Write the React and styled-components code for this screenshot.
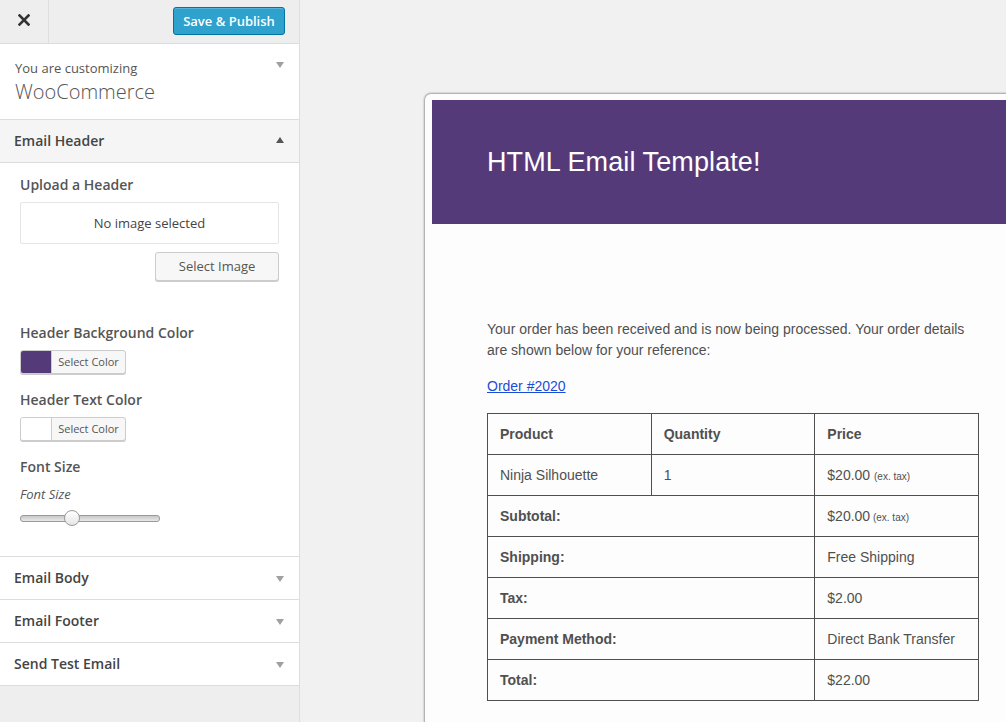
import styled, { createGlobalStyle } from "styled-components";

const GlobalStyle = createGlobalStyle`
  html, body {
    margin: 0;
    padding: 0;
    height: 722px;
    overflow: hidden;
    background: #f1f1f1;
  }
  * {
    box-sizing: border-box;
  }
`;

const orderRows = [
  { label: "Subtotal:", value: "$20.00", note: "(ex. tax)" },
  { label: "Shipping:", value: "Free Shipping" },
  { label: "Tax:", value: "$2.00" },
  { label: "Payment Method:", value: "Direct Bank Transfer" },
  { label: "Total:", value: "$22.00" },
];

const closedSections = ["Email Body", "Email Footer", "Send Test Email"];

function App() {
  return (
    <>
      <GlobalStyle />
      <Page>
        <Sidebar>
          <TopBar>
            <CloseButton>
              <svg width="12" height="12" viewBox="0 0 12 12">
                <path
                  d="M1.5 1.5 L10.5 10.5 M10.5 1.5 L1.5 10.5"
                  stroke="#333"
                  strokeWidth="2.6"
                  strokeLinecap="square"
                />
              </svg>
            </CloseButton>
            <PublishButton>Save &amp; Publish</PublishButton>
          </TopBar>

          <InfoSection>
            <div>
              <InfoLabel>You are customizing</InfoLabel>
              <InfoTitle>WooCommerce</InfoTitle>
            </div>
            <Arrow />
          </InfoSection>

          <SectionHead $open>
            Email Header
            <Arrow $up />
          </SectionHead>

          <SectionBody>
            <ControlTitle>Upload a Header</ControlTitle>
            <ImagePlaceholder>No image selected</ImagePlaceholder>
            <ButtonRow>
              <GrayButton>Select Image</GrayButton>
            </ButtonRow>

            <ControlTitle $gap={42}>Header Background Color</ControlTitle>
            <ColorButton>
              <Swatch $color="#553a7a" />
              <SwatchLabel>Select Color</SwatchLabel>
            </ColorButton>

            <ControlTitle $gap={16}>Header Text Color</ControlTitle>
            <ColorButton>
              <Swatch $color="#ffffff" />
              <SwatchLabel>Select Color</SwatchLabel>
            </ColorButton>

            <ControlTitle $gap={16}>Font Size</ControlTitle>
            <ControlHint>Font Size</ControlHint>
            <Slider>
              <SliderThumb />
            </Slider>
          </SectionBody>

          {closedSections.map((name) => (
            <SectionHead key={name}>
              {name}
              <Arrow />
            </SectionHead>
          ))}
        </Sidebar>

        <Preview>
          <EmailFrame>
            <EmailHeader>HTML Email Template!</EmailHeader>
            <EmailBody>
              <Intro>
                Your order has been received and is now being processed. Your
                order details are shown below for your reference:
              </Intro>
              <OrderLink href="#">Order #2020</OrderLink>
              <OrderTable>
                <tbody>
                  <tr>
                    <Th>Product</Th>
                    <Th>Quantity</Th>
                    <Th>Price</Th>
                  </tr>
                  <tr>
                    <Td>Ninja Silhouette</Td>
                    <Td>1</Td>
                    <Td>
                      $20.00 <Small>(ex. tax)</Small>
                    </Td>
                  </tr>
                  {orderRows.map((row) => (
                    <tr key={row.label}>
                      <Th colSpan={2}>{row.label}</Th>
                      <Td>
                        {row.value}
                        {row.note && <Small> {row.note}</Small>}
                      </Td>
                    </tr>
                  ))}
                </tbody>
              </OrderTable>
            </EmailBody>
          </EmailFrame>
        </Preview>
      </Page>
    </>
  );
}

export default App;

const Page = styled.div`
  display: flex;
  height: 722px;
  overflow: hidden;
  font-family: "Open Sans", "Liberation Sans", sans-serif;
`;

const Sidebar = styled.div`
  width: 300px;
  flex-shrink: 0;
  height: 100%;
  background: #eeeeee;
  border-right: 1px solid #dddddd;
  display: flex;
  flex-direction: column;
`;

const TopBar = styled.div`
  height: 44px;
  display: flex;
  align-items: center;
  justify-content: space-between;
  border-bottom: 1px solid #dddddd;
  padding-right: 14px;
`;

const CloseButton = styled.div`
  width: 49px;
  height: 43px;
  border-right: 1px solid #dddddd;
  display: flex;
  align-items: center;
  justify-content: center;
  padding-bottom: 3px;
`;

const PublishButton = styled.button`
  width: 112px;
  height: 28px;
  margin-top: -2px;
  border: 1px solid #0074a2;
  border-radius: 3px;
  background: #2ea2cc;
  box-shadow: inset 0 1px 0 rgba(120, 200, 230, 0.5);
  color: #ffffff;
  font-family: "Open Sans", sans-serif;
  font-size: 13px;
  font-weight: 600;
  padding: 0;
`;

const InfoSection = styled.div`
  height: 76px;
  background: #ffffff;
  border-bottom: 1px solid #dddddd;
  display: flex;
  justify-content: space-between;
  padding: 15px 15px 0 15px;
`;

const InfoLabel = styled.div`
  font-size: 13px;
  line-height: 18px;
  color: #555555;
`;

const InfoTitle = styled.div`
  font-size: 20px;
  line-height: 28px;
  font-weight: 300;
  color: #555555;
  margin-top: 1px;
`;

const Arrow = styled.span`
  width: 0;
  height: 0;
  margin-top: ${(p) => (p.$up ? "0" : "3px")};
  border-left: 4.5px solid transparent;
  border-right: 4.5px solid transparent;
  ${(p) =>
    p.$up
      ? "border-bottom: 6px solid #555;"
      : "border-top: 6px solid #a0a0a0;"}
  align-self: ${(p) => (p.$up ? "center" : "flex-start")};
`;

const SectionHead = styled.div`
  height: 43px;
  flex-shrink: 0;
  display: flex;
  align-items: center;
  justify-content: space-between;
  padding: 0 15px 2px 14px;
  background: ${(p) => (p.$open ? "#f5f5f5" : "#ffffff")};
  border-bottom: 1px solid #dddddd;
  font-size: 14px;
  font-weight: 600;
  color: #444444;

  ${Arrow} {
    align-self: center;
    margin-top: ${(p) => (p.$open ? "0" : "3px")};
  }
`;

const SectionBody = styled.div`
  background: #ffffff;
  border-bottom: 1px solid #dddddd;
  padding: 12px 20px 30px 20px;
  display: flex;
  flex-direction: column;
`;

const ControlTitle = styled.div`
  font-size: 14px;
  line-height: 20px;
  font-weight: 600;
  color: #555555;
  margin-top: ${(p) => (p.$gap ? `${p.$gap}px` : "0")};
  margin-bottom: 7px;
`;

const ImagePlaceholder = styled.div`
  width: 259px;
  height: 42px;
  border: 1px solid #e5e5e5;
  border-radius: 2px;
  display: flex;
  align-items: center;
  justify-content: center;
  font-size: 13px;
  color: #444444;
`;

const ButtonRow = styled.div`
  display: flex;
  justify-content: flex-end;
  width: 259px;
  margin-top: 8px;
`;

const GrayButton = styled.button`
  width: 124px;
  height: 29px;
  border: 1px solid #cccccc;
  border-radius: 3px;
  background: #f7f7f7;
  box-shadow: 0 1px 0 #cccccc;
  font-family: "Open Sans", sans-serif;
  font-size: 13px;
  color: #555555;
  padding: 0 0 2px 0;
`;

const ColorButton = styled.div`
  display: flex;
  width: 106px;
  height: 24px;
  border: 1px solid #cccccc;
  border-radius: 3px;
  background: #f7f7f7;
  box-shadow: 0 1px 0 #cccccc;
  overflow: hidden;
`;

const Swatch = styled.span`
  width: 31px;
  height: 100%;
  background: ${(p) => p.$color};
  border-right: 1px solid #cccccc;
`;

const SwatchLabel = styled.span`
  flex: 1;
  display: flex;
  align-items: center;
  justify-content: center;
  padding-bottom: 1px;
  font-size: 11px;
  color: #555555;
`;

const ControlHint = styled.div`
  font-size: 13px;
  line-height: 20px;
  font-style: italic;
  color: #555555;
  margin-top: 0;
  margin-bottom: 6px;
`;

const Slider = styled.div`
  position: relative;
  width: 140px;
  height: 16px;
  display: flex;
  align-items: center;

  &::before {
    content: "";
    width: 100%;
    height: 5px;
    border-radius: 3px;
    border: 1px solid #9a9a9a;
    background: linear-gradient(#c8c8c8, #e8e8e8);
  }
`;

const SliderThumb = styled.span`
  position: absolute;
  left: 44px;
  top: 0;
  width: 16px;
  height: 16px;
  border-radius: 50%;
  border: 1px solid #9a9a9a;
  background: linear-gradient(#ffffff, #e6e6e6);
`;

const Preview = styled.div`
  flex: 1;
  min-width: 0;
  overflow: hidden;
  padding: 94px 0 0 125px;
  background: #f1f1f1;
`;

const EmailFrame = styled.div`
  width: 640px;
  height: 700px;
  background: #fdfdfd;
  border-radius: 6px 0 0 0;
  box-shadow: 0 0 2px 1px rgba(0, 0, 0, 0.35);
  padding: 6px 0 0 7px;
  font-family: "Liberation Sans", Arial, sans-serif;
`;

const EmailHeader = styled.div`
  width: 620px;
  height: 124px;
  background: #553a7a;
  color: #ffffff;
  display: flex;
  align-items: center;
  padding-left: 55px;
  font-size: 27px;
  letter-spacing: 0.1px;
`;

const EmailBody = styled.div`
  width: 547px;
  padding: 95px 0 0 55px;
  color: #505050;
`;

const Intro = styled.p`
  margin: 0;
  font-size: 14px;
  line-height: 21px;
`;

const OrderLink = styled.a`
  display: block;
  margin-top: 15px;
  font-size: 14px;
  line-height: 21px;
  color: #1a4dd6;
  text-decoration: underline;
  width: max-content;
`;

const OrderTable = styled.table`
  margin-top: 16px;
  width: 492px;
  border-collapse: collapse;
  table-layout: fixed;
  font-size: 14px;
  color: #505050;

  td,
  th {
    border: 1px solid #4f4f4f;
    height: 41px;
    padding: 0 12px;
    text-align: left;
    vertical-align: middle;
  }
`;

const Th = styled.th`
  font-weight: bold;
`;

const Td = styled.td`
  font-weight: normal;
`;

const Small = styled.small`
  font-size: 10px;
`;
